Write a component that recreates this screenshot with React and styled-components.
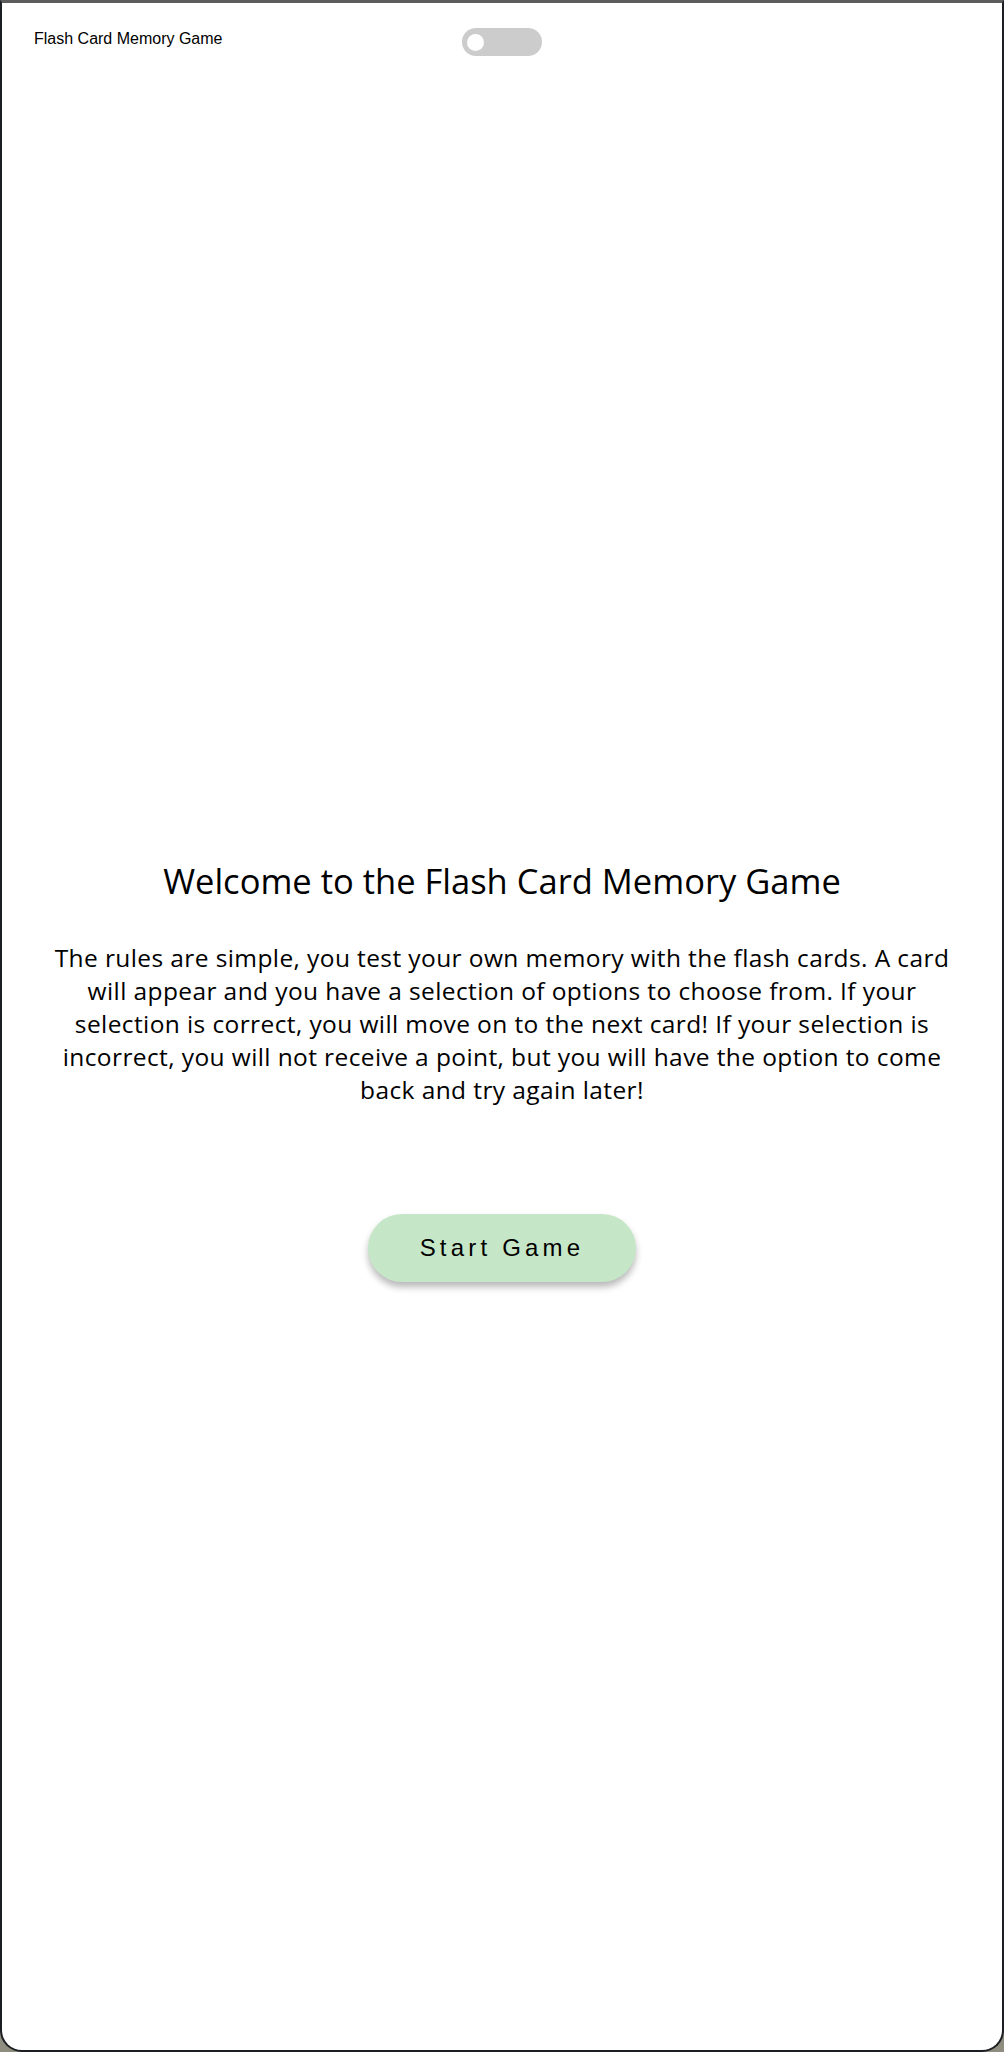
import { useState } from "react";
import styled, { createGlobalStyle } from "styled-components";

const GlobalStyle = createGlobalStyle`
  html, body {
    margin: 0;
    padding: 0;
  }
  body {
    background: linear-gradient(#1b2025 0, #1b2025 1795px, #8f8d80 1795px);
    font-family: "Liberation Sans", Arial, sans-serif;
  }
`;

const Frame = styled.div`
  box-sizing: border-box;
  height: 2052px;
  background: #fff;
  border: 2px solid #1b1f23;
  border-top: 3px solid #5c5c5c;
  border-radius: 0 0 22px 22px;
  display: flex;
  flex-direction: column;
`;

const Header = styled.header`
  display: grid;
  grid-template-columns: 1fr auto 1fr;
  align-items: center;
  padding: 25px 32px 0;
`;

const Title = styled.div`
  font-family: "Liberation Sans", Arial, sans-serif;
  font-size: 16px;
  color: #000;
  align-self: start;
  margin-top: 2px;
`;

const Toggle = styled.button`
  width: 80px;
  height: 28px;
  border: none;
  border-radius: 14px;
  background: ${(p) => (p.$on ? "#8fce91" : "#cccccc")};
  padding: 0 5px;
  display: flex;
  align-items: center;
  justify-content: ${(p) => (p.$on ? "flex-end" : "flex-start")};
  cursor: pointer;
`;

const Knob = styled.span`
  width: 17px;
  height: 17px;
  border-radius: 50%;
  background: #fff;
`;

const Main = styled.main`
  display: flex;
  flex-direction: column;
  align-items: center;
  padding: 0 40px;
  margin-top: 801px;
`;

const Heading = styled.h1`
  margin: 0;
  font-family: "Open Sans", "Liberation Sans", sans-serif;
  font-weight: 400;
  font-size: 34.5px;
  line-height: 48px;
  color: #000;
  text-align: center;
`;

const Rules = styled.p`
  margin: 36px 0 0;
  font-family: "Open Sans", "Liberation Sans", sans-serif;
  font-size: 24.5px;
  letter-spacing: 0.4px;
  line-height: 33px;
  color: #000;
  text-align: center;
`;

const StartButton = styled.button`
  margin-top: 108px;
  width: 268px;
  height: 68px;
  border: none;
  border-radius: 34px;
  background: #c6e7c7;
  box-shadow: 0 5px 7px rgba(0, 0, 0, 0.28);
  font-family: "Liberation Sans", Arial, sans-serif;
  font-size: 24px;
  letter-spacing: 4.2px;
  color: #000;
  cursor: pointer;
`;

export default function App() {
  const [dark, setDark] = useState(false);
  return (
    <>
      <GlobalStyle />
      <Frame>
        <Header>
          <Title>Flash Card Memory Game</Title>
          <Toggle $on={dark} onClick={() => setDark(!dark)} aria-label="toggle theme">
            <Knob />
          </Toggle>
          <div />
        </Header>
        <Main>
          <Heading>Welcome to the Flash Card Memory Game</Heading>
          <Rules>
            The rules are simple, you test your own memory with the flash cards. A card will appear
            and you have a selection of options to choose from. If your selection is correct, you
            will move on to the next card! If your selection is incorrect, you will not receive a
            point, but you will have the option to come back and try again later!
          </Rules>
          <StartButton>Start Game</StartButton>
        </Main>
      </Frame>
    </>
  );
}
